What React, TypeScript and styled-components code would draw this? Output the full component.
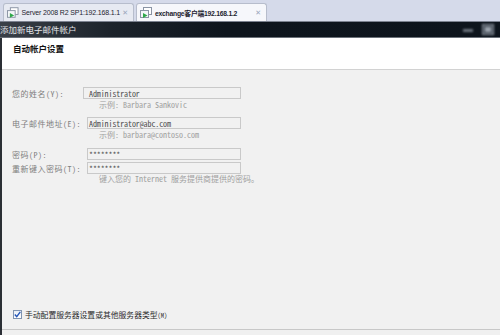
import React from 'react';
import styled, { createGlobalStyle } from 'styled-components';

const GlobalStyle = createGlobalStyle`
  html, body {
    margin: 0;
    padding: 0;
    background: #f0f0f0;
  }
`;

const cjk = `"Noto Sans CJK SC", sans-serif`;
const mono = `"Noto Sans Mono CJK SC", "Liberation Mono", "Noto Sans CJK SC", monospace`;

const Screen = styled.div`
  width: 500px;
  height: 335px;
  display: flex;
  flex-direction: column;
  overflow: hidden;
`;

const TabStrip = styled.div`
  height: 22px;
  box-sizing: border-box;
  background: #d5daea;
  border-bottom: 1px solid #7c8290;
  display: flex;
  align-items: flex-end;
  gap: 2px;
  padding-left: 3px;
`;

const Tab = styled.div<{ active?: boolean }>`
  width: 131px;
  height: 18px;
  box-sizing: border-box;
  border: 1px solid #b7bdcc;
  border-bottom: none;
  border-radius: 3px 3px 0 0;
  background: ${p => (p.active ? '#f6f7fb' : '#e7eaf2')};
  display: flex;
  align-items: center;
  padding: 0 5px 0 3px;
  gap: 2px;
`;

const TabLabel = styled.span<{ active?: boolean }>`
  flex: 1;
  font-family: "Liberation Sans", ${cjk};
  font-size: ${p => (p.active ? 6.8 : 7)}px;
  letter-spacing: ${p => (p.active ? -0.25 : -0.15)}px;
  font-weight: ${p => (p.active ? 700 : 400)};
  color: #1e2430;
  white-space: nowrap;
`;

const TabClose = styled.span`
  font-family: "DejaVu Sans", sans-serif;
  font-size: 7px;
  color: #9aa6bd;
`;

const TitleBar = styled.div`
  height: 16px;
  box-sizing: border-box;
  background: linear-gradient(90deg, #3a4048 0%, #1c232b 22%, #0e151d 45%, #0d141c 100%);
  border-bottom: 1px solid #6a7078;
  display: flex;
  align-items: center;
  justify-content: space-between;
  padding-right: 6px;
`;

const TitleText = styled.span`
  font-family: ${cjk};
  font-size: 8.5px;
  color: #e2e4e8;
  line-height: 1;
`;

const WindowButtons = styled.div`
  display: flex;
  align-items: center;
  gap: 8px;
  filter: blur(0.8px);
`;

const Dialog = styled.div`
  flex: 1;
  display: flex;
  flex-direction: column;
  border-left: 2px solid #2b2f35;
`;

const Header = styled.div`
  height: 32px;
  box-sizing: border-box;
  background: #ffffff;
  border-bottom: 1px solid #d2d2d2;
  padding: 5px 0 0 11px;
  font-family: ${cjk};
  font-size: 8.5px;
  font-weight: 700;
  line-height: 10px;
  color: #111;
`;

const Body = styled.div`
  flex: 1;
  display: flex;
  flex-direction: column;
  justify-content: space-between;
  background: #f1f1f1;
  border-bottom: 1px solid #c8c8c8;
  padding: 17px 0 9px 10px;
`;

const Form = styled.div`
  display: flex;
  flex-direction: column;
  font-family: ${mono};
  font-size: 8px;
`;

const Row = styled.div<{ gap?: number }>`
  display: flex;
  align-items: center;
  height: 12px;
  margin-top: ${p => p.gap ?? 0}px;
`;

const Label = styled.span`
  width: 75px;
  color: #7e7e7e;
  white-space: nowrap;
  letter-spacing: 0.5px;
`;

const Field = styled.div<{ wide?: boolean }>`
  margin-left: ${p => (p.wide ? -4 : 0)}px;
  width: ${p => (p.wide ? 158 : 154)}px;
  height: 12px;
  box-sizing: border-box;
  border: 1px solid #c9c9c9;
  padding-left: ${p => (p.wide ? 5 : 1)}px;
  display: flex;
  align-items: center;
  color: #4e4e4e;
  letter-spacing: -0.1px;
  white-space: nowrap;
`;

const Hint = styled.div<{ top?: number }>`
  margin: ${p => p.top ?? 1}px 0 0 87px;
  height: 10px;
  line-height: 10px;
  color: #a0a0a0;
  white-space: nowrap;
  letter-spacing: 0;
`;

const CheckRow = styled.div`
  display: flex;
  align-items: center;
  gap: 3px;
  padding-left: 1px;
  font-family: ${cjk};
  font-size: 7.8px;
  color: #2a2a2a;
`;

const Box = styled.span`
  width: 9px;
  height: 9px;
  box-sizing: border-box;
  border: 1px solid #8094b0;
  background: linear-gradient(#e8eef6, #ffffff);
  display: flex;
  align-items: center;
  justify-content: center;
`;

const Small = styled.span`
  font-family: ${mono};
  font-size: 6.5px;
`;

const Spacer = styled.div`
  height: 5px;
  background: #f0f0f0;
`;

const TabIcon = () => (
  <svg width="13" height="12" viewBox="0 0 13 12">
    <rect x="3.5" y="0.5" width="8" height="7" fill="#fff" stroke="#8a94a4" />
    <rect x="0.5" y="3.5" width="8" height="7" fill="#f4f6f9" stroke="#8a94a4" />
    <path d="M3 6 L7.5 8.5 L3 11 Z" fill="#2fa84a" />
  </svg>
);

const App: React.FC = () => (
  <Screen>
    <GlobalStyle />
    <TabStrip>
      <Tab>
        <TabIcon />
        <TabLabel>Server 2008 R2 SP1:192.168.1.1</TabLabel>
        <TabClose>✕</TabClose>
      </Tab>
      <Tab active>
        <TabIcon />
        <TabLabel active>exchange客户端192.168.1.2</TabLabel>
        <TabClose>✕</TabClose>
      </Tab>
    </TabStrip>
    <TitleBar>
      <TitleText>添加新电子邮件帐户</TitleText>
      <WindowButtons>
        <svg width="12" height="6" viewBox="0 0 12 6">
          <rect x="1" y="2" width="10" height="3" fill="#6b737d" />
        </svg>
        <svg width="12" height="11" viewBox="0 0 12 11">
          <rect x="0.5" y="0.5" width="11" height="10" fill="#4a525c" stroke="#8a929c" />
          <rect x="3" y="3" width="6" height="5" fill="#9aa2ac" />
        </svg>
      </WindowButtons>
    </TitleBar>
    <Dialog>
      <Header>自动帐户设置</Header>
      <Body>
        <Form>
          <Row>
            <Label>您的姓名(Y):</Label>
            <Field wide>Administrator</Field>
          </Row>
          <Hint>示例: Barbara Sankovic</Hint>
          <Row gap={7}>
            <Label>电子邮件地址(E):</Label>
            <Field>Administrator@abc.com</Field>
          </Row>
          <Hint>示例: barbara@contoso.com</Hint>
          <Row gap={8}>
            <Label>密码(P):</Label>
            <Field>********</Field>
          </Row>
          <Row gap={2}>
            <Label>重新键入密码(T):</Label>
            <Field>********</Field>
          </Row>
          <Hint top={0}>键入您的 Internet 服务提供商提供的密码。</Hint>
        </Form>
        <CheckRow>
          <Box>
            <svg width="7" height="7" viewBox="0 0 7 7">
              <path d="M0.8 3.6 L2.7 5.6 L6.3 0.9" fill="none" stroke="#2456b8" strokeWidth="1.4" />
            </svg>
          </Box>
          <span>
            手动配置服务器设置或其他服务器类型<Small>(M)</Small>
          </span>
        </CheckRow>
      </Body>
      <Spacer />
    </Dialog>
  </Screen>
);

export default App;
